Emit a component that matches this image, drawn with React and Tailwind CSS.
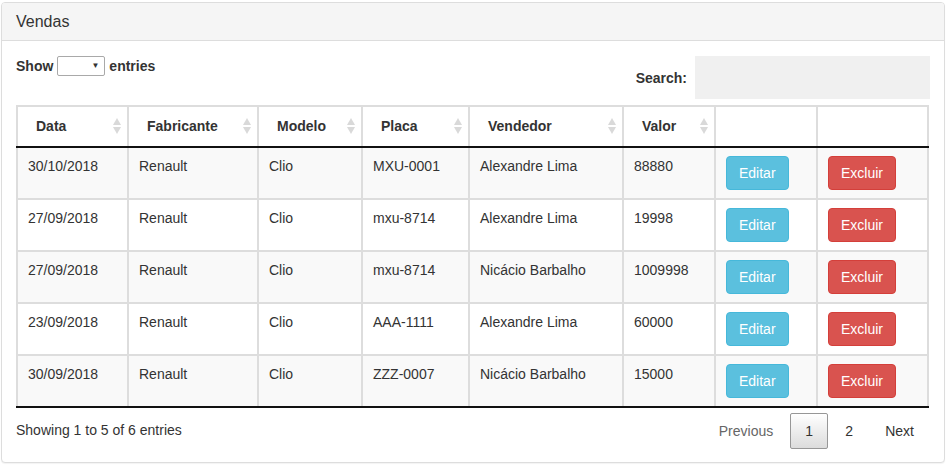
import React from "react";

const rows = [
  { data: "30/10/2018", fab: "Renault", modelo: "Clio", placa: "MXU-0001", vendedor: "Alexandre Lima", valor: "88880" },
  { data: "27/09/2018", fab: "Renault", modelo: "Clio", placa: "mxu-8714", vendedor: "Alexandre Lima", valor: "19998" },
  { data: "27/09/2018", fab: "Renault", modelo: "Clio", placa: "mxu-8714", vendedor: "Nicácio Barbalho", valor: "1009998" },
  { data: "23/09/2018", fab: "Renault", modelo: "Clio", placa: "AAA-1111", vendedor: "Alexandre Lima", valor: "60000" },
  { data: "30/09/2018", fab: "Renault", modelo: "Clio", placa: "ZZZ-0007", vendedor: "Nicácio Barbalho", valor: "15000" },
];

const headers = [
  { label: "Data", w: "w-[111px]" },
  { label: "Fabricante", w: "w-[130px]" },
  { label: "Modelo", w: "w-[104px]" },
  { label: "Placa", w: "w-[107px]" },
  { label: "Vendedor", w: "w-[154px]" },
  { label: "Valor", w: "w-[92px]" },
];

function SortIcon() {
  return (
    <svg width="8" height="16" viewBox="0 0 8 16" className="shrink-0">
      <polygon points="4,0 8,7 0,7" fill="#d9d9d9" />
      <polygon points="0,9 8,9 4,16" fill="#d9d9d9" />
    </svg>
  );
}

function App() {
  return (
    <div className="bg-white min-h-[468px] pt-[2px] pl-[1px] text-[#333] text-[14px] leading-[20px] font-['Liberation_Sans',Arial,sans-serif]">
      <div className="w-[944px] h-[461px] border border-[#ddd] rounded-[4px] shadow-[0_1px_1px_rgba(0,0,0,0.05)] bg-white">
        <div className="h-[38px] px-[14px] flex items-center bg-[#f5f5f5] border-b border-[#ddd] rounded-t-[3px] text-[16px]">
          Vendas
        </div>
        <div className="px-[14px] pt-[15px]">
          <div className="flex justify-between items-start">
            <div className="flex items-center h-[20px] font-bold">
              <span>Show</span>
              <div className="ml-[4px] mr-[4px] w-[48px] h-[20px] border border-[#a9a9a9] rounded-[2px] flex items-center justify-end pr-[5px]">
                <span className="text-[8px] leading-none text-[#333]">▼</span>
              </div>
              <span>entries</span>
            </div>
            <div className="flex items-center font-bold">
              <span>Search:</span>
              <div className="ml-[8px] w-[235px] h-[43px] bg-[#f0f0f0]" />
            </div>
          </div>

          <table className="mt-[6px] w-[913px] table-fixed border-collapse">
            <thead>
              <tr>
                {headers.map((h) => (
                  <th
                    key={h.label}
                    className={`${h.w} h-[41px] border-2 border-[#ddd] border-b-[#111] pl-[18px] pr-[6px] pb-[2px] text-left font-bold`}
                  >
                    <div className="flex items-center justify-between">
                      <span>{h.label}</span>
                      <SortIcon />
                    </div>
                  </th>
                ))}
                <th className="w-[102px] border-2 border-[#ddd] border-b-[#111]" />
                <th className="border-2 border-[#ddd] border-b-[#111]" />
              </tr>
            </thead>
            <tbody>
              {rows.map((r, i) => {
                const last = i === rows.length - 1;
                const cell = `border-2 border-[#ddd] ${last ? "border-b-[#111]" : ""} pl-[10px] pr-[8px] pt-[8px] pb-[8px] align-top font-normal`;
                return (
                  <tr key={i} className={i % 2 === 0 ? "bg-[#f9f9f9]" : "bg-white"}>
                    <td className={cell}>{r.data}</td>
                    <td className={cell}>{r.fab}</td>
                    <td className={cell}>{r.modelo}</td>
                    <td className={cell}>{r.placa}</td>
                    <td className={cell}>{r.vendedor}</td>
                    <td className={cell}>{r.valor}</td>
                    <td className={cell}>
                      <button className="h-[34px] px-[12px] border border-[#46b8da] bg-[#5bc0de] text-white rounded-[4px]">
                        Editar
                      </button>
                    </td>
                    <td className={cell}>
                      <button className="h-[34px] px-[12px] border border-[#d43f3a] bg-[#d9534f] text-white rounded-[4px]">
                        Excluir
                      </button>
                    </td>
                  </tr>
                );
              })}
            </tbody>
          </table>

          <div className="flex justify-between items-start">
            <div className="pt-[12px]">Showing 1 to 5 of 6 entries</div>
            <div className="flex items-center pt-[5px]">
              <span className="h-[36px] px-[14px] flex items-center text-[#666] border border-transparent">Previous</span>
              <span className="ml-[2px] h-[36px] w-[38px] flex items-center justify-center border border-[#979797] rounded-[2px] bg-gradient-to-b from-white to-[#dcdcdc]">
                1
              </span>
              <span className="ml-[2px] h-[36px] w-[38px] flex items-center justify-center border border-transparent">2</span>
              <span className="ml-[2px] h-[36px] pl-[14px] pr-[15px] flex items-center border border-transparent">Next</span>
            </div>
          </div>
        </div>
      </div>
    </div>
  );
}

export default App;
